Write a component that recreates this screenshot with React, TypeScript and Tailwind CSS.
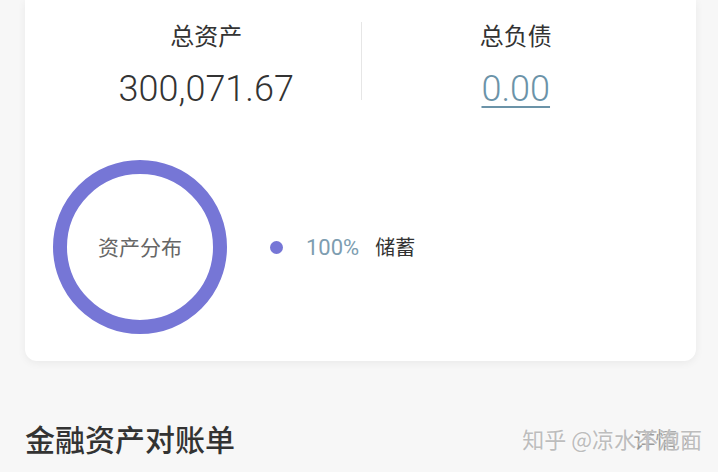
import React from 'react'

const cjk = { fontFamily: '"Noto Sans CJK SC", "Noto Sans", sans-serif' }
const num = { fontFamily: 'Roboto, "Noto Sans CJK SC", sans-serif' }

function Ring() {
  return (
    <div className="relative h-[174px] w-[174px] shrink-0">
      <svg width="174" height="174" viewBox="0 0 174 174" className="absolute inset-0">
        <circle cx="87" cy="87" r="80" fill="none" stroke="#7676d6" strokeWidth="14" />
      </svg>
      <div className="flex h-full w-full items-center justify-center text-[21px] text-[#666666]">
        资产分布
      </div>
    </div>
  )
}

export default function App() {
  return (
    <div className="h-[472px] w-[718px] overflow-hidden bg-[#f7f7f7]" style={cjk}>
      <div className="mx-[25px] w-[671px] rounded-b-[12px] bg-white pb-[27px] pl-[27px] pr-[26px] shadow-[0_2px_8px_rgba(0,0,0,0.06)]">
        <div className="flex pt-[18px]">
          <div className="flex flex-1 flex-col items-center">
            <div className="text-[24px] leading-[34px] text-[#333333]">总资产</div>
            <div className="mt-[15px] text-[36px] font-light leading-[44px] text-[#333333]" style={num}>
              300,071.67
            </div>
          </div>
          <div className="mt-[4px] h-[78px] w-px bg-[#e6e6e6]" />
          <div className="flex flex-1 flex-col items-center">
            <div className="text-[24px] leading-[34px] text-[#333333]">总负债</div>
            <div
              className="mt-[15px] text-[36px] font-light leading-[44px] text-[#6b93a8] underline decoration-2 underline-offset-[5px]"
              style={num}
            >
              0.00
            </div>
          </div>
        </div>

        <div className="mt-[49px] flex items-center pl-[1px]">
          <Ring />
          <div className="ml-[43px] flex items-center">
            <span className="h-[13px] w-[13px] rounded-full bg-[#7676d6]" />
            <span className="ml-[23px] text-[22px] text-[#7d9db0]" style={num}>
              100%
            </span>
            <span className="ml-[16px] text-[20px] text-[#333333]">储蓄</span>
          </div>
        </div>
      </div>

      <div className="relative mt-[57px] flex items-center justify-between px-[25px]">
        <div className="text-[30px] font-medium leading-[40px] text-[#333333]">金融资产对账单</div>
        <div className="mr-[4px] text-[22px] text-[#9a9a9a]">详情 ›</div>
        <div className="absolute right-[16px] top-[4px] text-[22px] text-[#bdbdbd] [text-shadow:0_0_2px_#ffffff]">
          知乎 @凉水不泡面
        </div>
      </div>
    </div>
  )
}
